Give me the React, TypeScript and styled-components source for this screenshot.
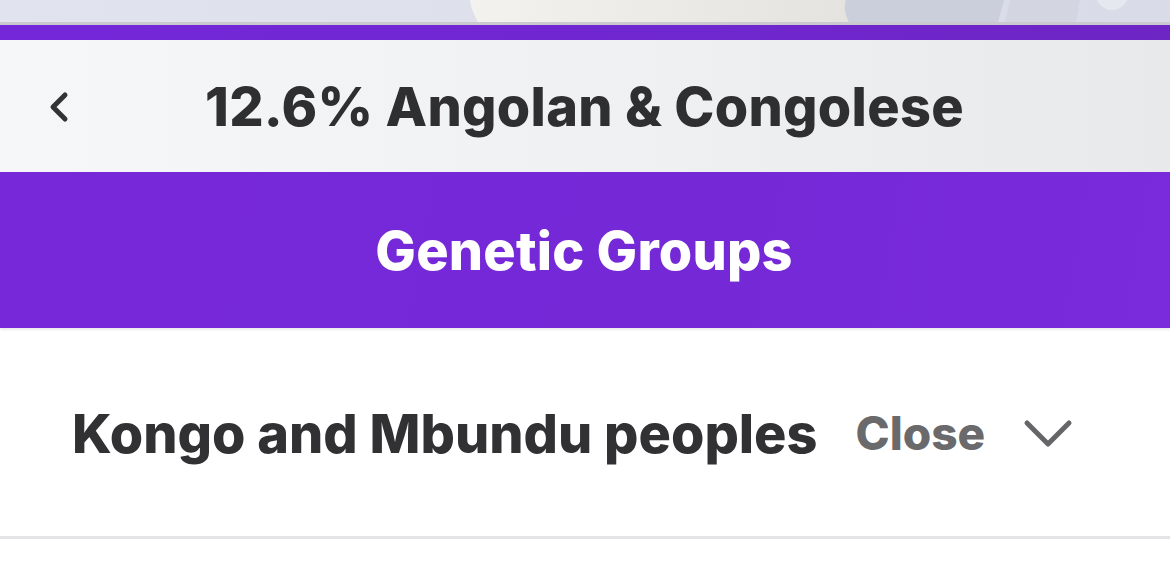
import React from "react";
import styled, { createGlobalStyle } from "styled-components";

const GlobalStyle = createGlobalStyle`
    html, body {
        margin: 0;
        padding: 0;
        background: #ffffff;
    }
    body {
        font-family: Inter, "Noto Sans", sans-serif;
        -webkit-font-smoothing: antialiased;
    }
`;

const HeroPhoto = () => (
    <svg width="1170" height="22" viewBox="0 0 1170 22" preserveAspectRatio="none">
        <defs>
            <linearGradient id="sky" x1="0" x2="1" y1="0" y2="0">
                <stop offset="0" stopColor="#e1e4ee" />
                <stop offset="1" stopColor="#d9dce8" />
            </linearGradient>
            <linearGradient id="cup" x1="0" x2="1" y1="0" y2="0">
                <stop offset="0" stopColor="#f3f2ef" />
                <stop offset="1" stopColor="#e4e3df" />
            </linearGradient>
        </defs>
        <rect width="1170" height="22" fill="url(#sky)" />
        <path d="M470 0 H846 C843 8 846 16 849 22 H478 C474 15 471 8 470 0 Z" fill="url(#cup)" />
        <path d="M846 0 H1004 L998 22 H849 C846 16 843 8 846 0 Z" fill="#cbcfdb" />
        <path d="M1010 0 H1080 L1076 22 H1005 Z" fill="#d3d6e1" />
        <circle cx="1112" cy="-6" r="16" fill="#e6e8ef" />
    </svg>
);

const BackIcon = () => (
    <svg width="26" height="34" viewBox="0 0 26 34" fill="none">
        <path d="M19 5 L7 17 L19 29" stroke="#333336" strokeWidth="5" strokeLinecap="round" strokeLinejoin="round" />
    </svg>
);

const ChevronDown = () => (
    <svg width="52" height="32" viewBox="0 0 52 32" fill="none">
        <path d="M5 6 L26 27 L47 6" stroke="#666668" strokeWidth="5" strokeLinecap="round" strokeLinejoin="round" />
    </svg>
);

const App = () => {
    return (
        <>
            <GlobalStyle />
            <Page>
                <Hero>
                    <HeroPhoto />
                </Hero>
                <AccentBar />
                <Header>
                    <BackButton aria-label="Back">
                        <BackIcon />
                    </BackButton>
                    <Title>12.6% Angolan &amp; Congolese</Title>
                </Header>
                <Banner>
                    <BannerTitle>Genetic Groups</BannerTitle>
                </Banner>
                <GroupRow>
                    <GroupName>Kongo and Mbundu peoples</GroupName>
                    <Toggle>
                        <ToggleLabel>Close</ToggleLabel>
                        <ChevronDown />
                    </Toggle>
                </GroupRow>
            </Page>
        </>
    );
};

export default App;

const Page = styled.div`
    width: 1170px;
    height: 574px;
    overflow: hidden;
    display: flex;
    flex-direction: column;
    background: #ffffff;
`;

const Hero = styled.div`
    height: 22px;
    line-height: 0;
    border-bottom: 3px solid #c9c9cf;
`;

const AccentBar = styled.div`
    height: 15px;
    background: linear-gradient(90deg, #7427d9 0%, #6f27cf 60%, #6d25c4 100%);
`;

const Header = styled.div`
    height: 132px;
    display: flex;
    align-items: center;
    padding-left: 46px;
    background: linear-gradient(90deg, #f6f7f9 0%, #f0f1f3 50%, #e8e9eb 100%);
`;

const BackButton = styled.button`
    border: 0;
    background: none;
    padding: 0;
    width: 26px;
    height: 34px;
    display: flex;
    margin-top: 2px;
`;

const Title = styled.h1`
    margin: 0 0 0 133px;
    font-size: 54px;
    font-weight: 800;
    color: #2f2f31;
    letter-spacing: 0.3px;
    white-space: nowrap;
`;

const Banner = styled.div`
    height: 156px;
    display: flex;
    align-items: center;
    justify-content: center;
    background: linear-gradient(100deg, #7729da 0%, #7428d6 60%, #7a2bdc 100%);
    box-shadow: 0 2px 2px rgba(0, 0, 0, 0.08);
    position: relative;
`;

const BannerTitle = styled.h2`
    margin: 0 0 0 -2px;
    font-size: 54px;
    font-weight: 800;
    color: #ffffff;
    letter-spacing: 0.2px;
    white-space: nowrap;
`;

const GroupRow = styled.div`
    height: 206px;
    display: flex;
    align-items: center;
    padding-left: 72px;
    border-bottom: 3px solid #e4e4e6;
    background: #ffffff;
    margin-top: 2px;
`;

const GroupName = styled.span`
    font-size: 54px;
    font-weight: 800;
    color: #313133;
    white-space: nowrap;
`;

const Toggle = styled.div`
    display: flex;
    align-items: center;
    margin-left: 38px;
    gap: 37px;
`;

const ToggleLabel = styled.span`
    font-size: 46px;
    font-weight: 800;
    color: #6a6a6c;
`;
